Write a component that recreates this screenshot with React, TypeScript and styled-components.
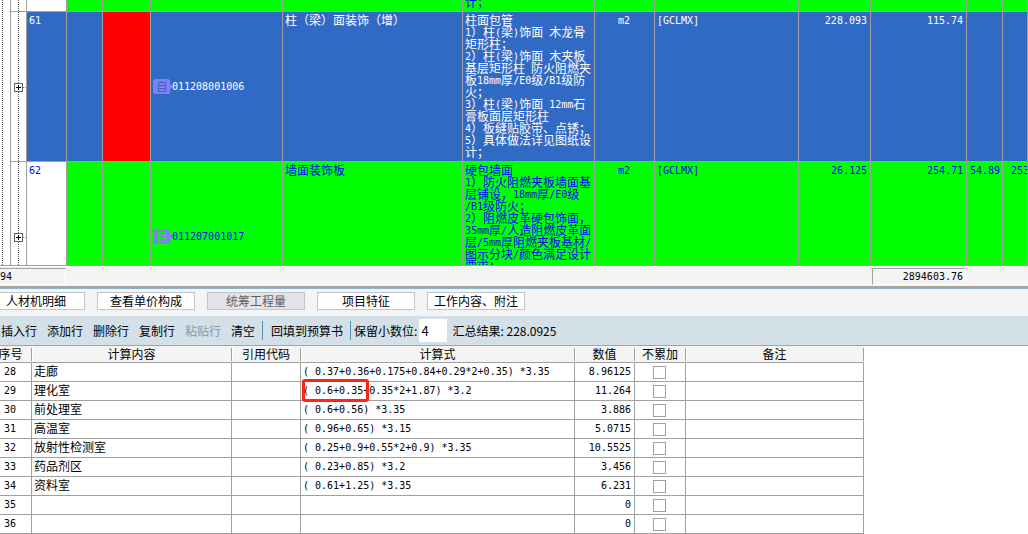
import React, { useState } from 'react';
import styled, { createGlobalStyle, css } from 'styled-components';

const GREEN = '#00ff00';
const BLUE = '#316ac5';
const RED = '#ff0000';
const LINE = '#a0a0a0';
const PANEL = '#f4f4f4';

const GlobalStyle = createGlobalStyle`
  * { box-sizing: border-box; }
  html, body { margin: 0; background: #fff; overflow: hidden; }
  body {
    font-family: 'Noto Sans CJK SC', sans-serif;
    font-size: 12px;
    line-height: 12px;
    color: #000;
    text-spacing-trim: space-all;
  }
  button, input { font: inherit; color: inherit; }
`;

const Page = styled.main`
  display: flex;
  flex-direction: column;
`;

/* Half-width characters sit on a 6px grid, half of a Chinese character. */
const Half = styled.span`
  font-family: 'DejaVu Sans Mono', 'Liberation Mono', monospace;
  font-size: 10px;
  line-height: 0;
  vertical-align: 1px;
  white-space: pre;
`;

function Mixed({ children }: { children: string }) {
  return (
    <>
      {children.split(/([\x20-\x7e]+)/).map((part, i) =>
        i % 2 ? <Half key={i}>{part}</Half> : part,
      )}
    </>
  );
}

/* ---------- bill of quantities ---------- */

const BillPane = styled.section`
  height: 266px;
  overflow: hidden;
  border-bottom: 1px solid ${LINE};
`;

const BillTable = styled.table`
  width: 100%;
  min-width: 1028px;
  table-layout: fixed;
  border-collapse: separate;
  border-spacing: 0;
`;

const BillRow = styled.tr<{ $bg: string; $ink: string; $height: number }>`
  height: ${(p) => p.$height}px;
  background: ${(p) => p.$bg};
  color: ${(p) => p.$ink};
`;

const BillCell = styled.td<{ $bg?: string; $align?: string; $middle?: boolean }>`
  padding: ${(p) => (p.$middle ? 0 : 2)}px 3px 0 2px;
  border-right: 1px solid ${LINE};
  border-bottom: 1px solid ${LINE};
  vertical-align: ${(p) => (p.$middle ? 'middle' : 'top')};
  text-align: ${(p) => p.$align || 'left'};
  white-space: pre;
  overflow: hidden;
  ${(p) => p.$bg && css`background: ${p.$bg};`}
`;

const PartialCell = styled(BillCell)`
  padding: 0 3px 0 2px;
`;

const Tail = styled.div`
  display: flex;
  align-items: flex-end;
  height: 11px;
  padding-bottom: 3px;
  overflow: hidden;
`;

const NumberCell = styled(BillCell)`
  padding-left: 3px;
`;

const WideNumberCell = styled(BillCell)`
  padding-left: 8px;
`;

const dots = 'repeating-linear-gradient(to bottom, #606060 0 1px, #fff 1px 2px)';

const Trunk = styled.td`
  padding: 0;
  border-right: 1px solid ${LINE};
  background: ${dots} 2px 0 / 1px 100% no-repeat #fff;
`;

const Branch = styled.td`
  padding: 2px 0 0 3px;
  border-right: 1px solid ${LINE};
  border-bottom: 1px solid ${LINE};
  background: ${dots} 7px 0 / 1px 100% no-repeat #fff;
  vertical-align: middle;
`;

const Toggle = styled.button`
  display: block;
  width: 12px;
  height: 9px;
  padding: 0;
  border: 0;
  background: none;
`;

const Code = styled.span`
  display: flex;
  align-items: center;
`;

const CodeText = styled.span`
  padding-bottom: 1px;
`;

const BadgeSvg = styled.svg`
  flex: none;
  width: 19px;
  height: 15px;
`;

function ExpandButton({ label }: { label: string }) {
  return (
    <Toggle type="button" aria-label={label}>
      <svg width="12" height="9" viewBox="0 0 12 9" shapeRendering="crispEdges" display="block">
        <rect x="0.5" y="0.5" width="8" height="8" fill="#fff" stroke="#606060" />
        <path d="M2 4.5h5M4.5 2v5" stroke="#000" />
        <path d="M9 4.5h1M11 4.5h1" stroke="#808080" />
      </svg>
    </Toggle>
  );
}

function Badge({ ink }: { ink: string }) {
  return (
    <BadgeSvg viewBox="0 0 19 15" shapeRendering="crispEdges" aria-hidden="true">
      <path d="M1 0h15v1h1v4h1v1h1v3h-1v1h-1v4h-1v1H1v-1H0V1h1z" fill="#8080f0" />
      <path d="M8.5 2v1M5.5 3v10M12.5 3v10M5 3.5h8M5 6.5h8M5 9.5h8M5 12.5h8" stroke={ink} />
    </BadgeSvg>
  );
}

interface BillItem {
  no: string;
  code: string;
  name: string;
  desc: string;
  unit: string;
  qty: string;
  price: string;
  labour: string;
  extra: string;
  selected?: boolean;
}

const bill: BillItem[] = [
  {
    no: '61',
    code: '011208001006',
    name: '柱（梁）面装饰（增）',
    desc: '柱面包管\n1）柱(梁)饰面 木龙骨\n矩形柱；\n2）柱(梁)饰面 木夹板\n基层矩形柱 防火阻燃夹\n板18mm厚/E0级/B1级防\n火；\n3）柱(梁)饰面 12mm石\n膏板面层矩形柱\n4）板缝贴胶带、点锈；\n5）具体做法详见图纸设\n计；',
    unit: 'm2',
    qty: '228.093',
    price: '115.74',
    labour: '',
    extra: '',
    selected: true,
  },
  {
    no: '62',
    code: '011207001017',
    name: '墙面装饰板',
    desc: '硬包墙面\n1）防火阻燃夹板墙面基\n层铺设，18mm厚/E0级\n/B1级防火；\n2）阻燃皮革硬包饰面，\n35mm厚/人造阻燃皮革面\n层/5mm厚阻燃夹板基材/\n图示分块/颜色满足设计\n要求；',
    unit: 'm2',
    qty: '26.125',
    price: '254.71',
    labour: '54.89',
    extra: '253',
  },
];

const billColumns = [11, 16, 40, 36, 48, 132, 180, 132, 60, 144, 72, 96, 36];

function Bill() {
  return (
    <BillPane>
      <BillTable>
        <colgroup>
          {billColumns.map((w, i) => (
            <col key={i} width={w} />
          ))}
          <col />
        </colgroup>
        <tbody>
          <BillRow $bg={GREEN} $ink="#0000ff" $height={12}>
            <Trunk />
            <Branch />
            <PartialCell $bg="#fff" />
            <PartialCell />
            <PartialCell />
            <PartialCell />
            <PartialCell />
            <PartialCell><Tail>计；</Tail></PartialCell>
            <PartialCell />
            <PartialCell />
            <PartialCell />
            <PartialCell />
            <PartialCell />
            <PartialCell />
          </BillRow>
          {bill.map((item) => {
            const bg = item.selected ? BLUE : GREEN;
            return (
              <BillRow key={item.no} $bg={bg} $ink={item.selected ? '#fff' : '#0000ff'} $height={150}>
                <Trunk />
                <Branch><ExpandButton label={`展开 ${item.no}`} /></Branch>
                <BillCell $bg={item.selected ? BLUE : '#fff'}><Mixed>{item.no}</Mixed></BillCell>
                <BillCell />
                <BillCell $bg={item.selected ? RED : undefined} />
                <BillCell $middle>
                  <Code><Badge ink={bg} /><CodeText><Mixed>{item.code}</Mixed></CodeText></Code>
                </BillCell>
                <BillCell><Mixed>{item.name}</Mixed></BillCell>
                <BillCell><Mixed>{item.desc}</Mixed></BillCell>
                <BillCell $align="center"><Mixed>{item.unit}</Mixed></BillCell>
                <BillCell><Mixed>[GCLMX]</Mixed></BillCell>
                <NumberCell $align="right"><Mixed>{item.qty}</Mixed></NumberCell>
                <NumberCell $align="right"><Mixed>{item.price}</Mixed></NumberCell>
                <NumberCell $align="right"><Mixed>{item.labour}</Mixed></NumberCell>
                <WideNumberCell><Mixed>{item.extra}</Mixed></WideNumberCell>
              </BillRow>
            );
          })}
        </tbody>
      </BillTable>
    </BillPane>
  );
}

const Totals = styled.div`
  display: grid;
  grid-template-columns: 66px 806px 94px;
  justify-content: start;
  padding: 1px 0;
  background: ${PANEL};
  border-top: 1px solid #fff;
`;

const Total = styled.output<{ $open?: boolean }>`
  grid-column: ${(p) => (p.$open ? 1 : 3)};
  height: 17px;
  padding: 1px 2px 0 0;
  border: 1px solid;
  border-color: ${LINE} #fff #fff ${LINE};
  text-align: ${(p) => (p.$open ? 'left' : 'right')};
  ${(p) => p.$open && css`border-left: 0;`}
`;

const Splitter = styled.div`
  height: 3px;
  background: #90b4c8;
  border-top: 2px solid #a8a498;
`;

/* ---------- tabs and toolbar ---------- */

const Tabs = styled.nav`
  display: flex;
  gap: 12px;
  margin-left: -13px;
  padding: 3px 0 6px;
  background: ${PANEL};
`;

const Tab = styled.button<{ $active?: boolean }>`
  width: 98px;
  height: 18px;
  padding: 0;
  line-height: 16px;
  border: 1px solid #c4c4d0;
  background: ${(p) => (p.$active ? '#e4e4e8' : '#fff')};
  color: ${(p) => (p.$active ? '#606060' : '#000')};
`;

const Toolbar = styled.div`
  display: flex;
  align-items: center;
  gap: 10px;
  height: 30px;
  padding-left: 1px;
  background: #d3e0e8;
  border-bottom: 1px solid #a8a498;
  white-space: nowrap;
`;

const Action = styled.button`
  padding: 0;
  border: 0;
  background: none;
  line-height: 18px;
  &:disabled { color: #8798a4; }
`;

const Group = styled.div`
  display: flex;
  align-items: center;
  gap: 8px;
  margin-left: -3px;
  &::before {
    content: '';
    width: 1px;
    height: 19px;
    background: #5090b8;
  }
`;

const Decimals = styled.label`
  display: flex;
  align-items: center;
  gap: 2px;
  margin-left: -5px;
`;

const DecimalsInput = styled.input`
  width: 28px;
  height: 23px;
  padding: 0 2px;
  border: 0;
  background: #fff;
  font-size: 13px;
`;

const Summary = styled.output`
  margin-left: -5px;
`;

/* ---------- calculation sheet ---------- */

const SheetTable = styled.table`
  width: 874px;
  margin-left: -10px;
  table-layout: fixed;
  border-collapse: separate;
  border-spacing: 0;
`;

const HeadCell = styled.th`
  height: 17px;
  padding: 0 1px 1px 0;
  font-weight: normal;
  border-bottom: 1px solid ${LINE};
  background:
    linear-gradient(${LINE}, ${LINE}) right 2px / 1px 13px no-repeat,
    linear-gradient(#fff, #fff) left 2px / 1px 13px no-repeat,
    ${PANEL};
`;

const SheetCell = styled.td<{ $align?: string }>`
  height: 19px;
  padding: 0 3px 2px 2px;
  border-right: 1px solid ${LINE};
  border-bottom: 1px solid ${LINE};
  text-align: ${(p) => p.$align || 'left'};
  white-space: pre;
`;

const TickCell = styled(SheetCell)`
  padding: 0 3px 0 2px;
`;

const Tick = styled.input`
  appearance: none;
  display: block;
  width: 13px;
  height: 13px;
  margin: 0 auto;
  border: 1px solid ${LINE};
  background: #fff;
  &:checked { background: ${LINE}; }
`;

const Marked = styled.span`
  position: relative;
`;

const Mark = styled.span`
  position: absolute;
  left: -1px;
  top: -2px;
  width: 67px;
  height: 23px;
  border: 3px solid #ff2418;
  border-radius: 3px;
`;

interface SheetRow {
  no: string;
  content: string;
  formula: string;
  value: string;
  marked?: boolean;
}

const sheet: SheetRow[] = [
  { no: '28', content: '走廊', formula: '( 0.37+0.36+0.175+0.84+0.29*2+0.35) *3.35', value: '8.96125' },
  { no: '29', content: '理化室', formula: '( 0.6+0.35+0.35*2+1.87) *3.2', value: '11.264', marked: true },
  { no: '30', content: '前处理室', formula: '( 0.6+0.56) *3.35', value: '3.886' },
  { no: '31', content: '高温室', formula: '( 0.96+0.65) *3.15', value: '5.0715' },
  { no: '32', content: '放射性检测室', formula: '( 0.25+0.9+0.55*2+0.9) *3.35', value: '10.5525' },
  { no: '33', content: '药品剂区', formula: '( 0.23+0.85) *3.2', value: '3.456' },
  { no: '34', content: '资料室', formula: '( 0.61+1.25) *3.35', value: '6.231' },
  { no: '35', content: '', formula: '', value: '0' },
  { no: '36', content: '', formula: '', value: '0' },
];

const sheetColumns = [
  { title: '序号', width: 42 },
  { title: '计算内容', width: 200 },
  { title: '引用代码', width: 69 },
  { title: '计算式', width: 274 },
  { title: '数值', width: 60 },
  { title: '不累加', width: 51 },
  { title: '备注', width: 178 },
];

function Sheet() {
  return (
    <SheetTable>
      <colgroup>
        {sheetColumns.map((c) => (
          <col key={c.title} width={c.width} />
        ))}
      </colgroup>
      <thead>
        <tr>
          {sheetColumns.map((c) => (
            <HeadCell key={c.title} scope="col">{c.title}</HeadCell>
          ))}
        </tr>
      </thead>
      <tbody>
        {sheet.map((row) => (
          <tr key={row.no}>
            <SheetCell $align="center"><Mixed>{row.no}</Mixed></SheetCell>
            <SheetCell>{row.content}</SheetCell>
            <SheetCell />
            <SheetCell>
              {row.marked ? (
                <Marked><Mixed>{row.formula}</Mixed><Mark /></Marked>
              ) : (
                <Mixed>{row.formula}</Mixed>
              )}
            </SheetCell>
            <SheetCell $align="right"><Mixed>{row.value}</Mixed></SheetCell>
            <TickCell><Tick type="checkbox" aria-label={`不累加 ${row.no}`} /></TickCell>
            <SheetCell />
          </tr>
        ))}
      </tbody>
    </SheetTable>
  );
}

const tabs = ['人材机明细', '查看单价构成', '统筹工程量', '项目特征', '工作内容、附注'];

export default function App() {
  const [active, setActive] = useState('统筹工程量');
  const [decimals, setDecimals] = useState('4');
  return (
    <Page>
      <GlobalStyle />
      <Bill />
      <Totals>
        <Total $open><Mixed>94</Mixed></Total>
        <Total><Mixed>2894603.76</Mixed></Total>
      </Totals>
      <Splitter />
      <Tabs>
        {tabs.map((t) => (
          <Tab key={t} type="button" $active={t === active} onClick={() => setActive(t)}>{t}</Tab>
        ))}
      </Tabs>
      <Toolbar>
        <Action type="button">插入行</Action>
        <Action type="button">添加行</Action>
        <Action type="button">删除行</Action>
        <Action type="button">复制行</Action>
        <Action type="button" disabled>粘贴行</Action>
        <Action type="button">清空</Action>
        <Group><Action type="button">回填到预算书</Action></Group>
        <Group>
          <Decimals>
            保留小数位:
            <DecimalsInput value={decimals} onChange={(e) => setDecimals(e.target.value)} />
          </Decimals>
        </Group>
        <Summary>汇总结果: 228.0925</Summary>
      </Toolbar>
      <Sheet />
    </Page>
  );
}
